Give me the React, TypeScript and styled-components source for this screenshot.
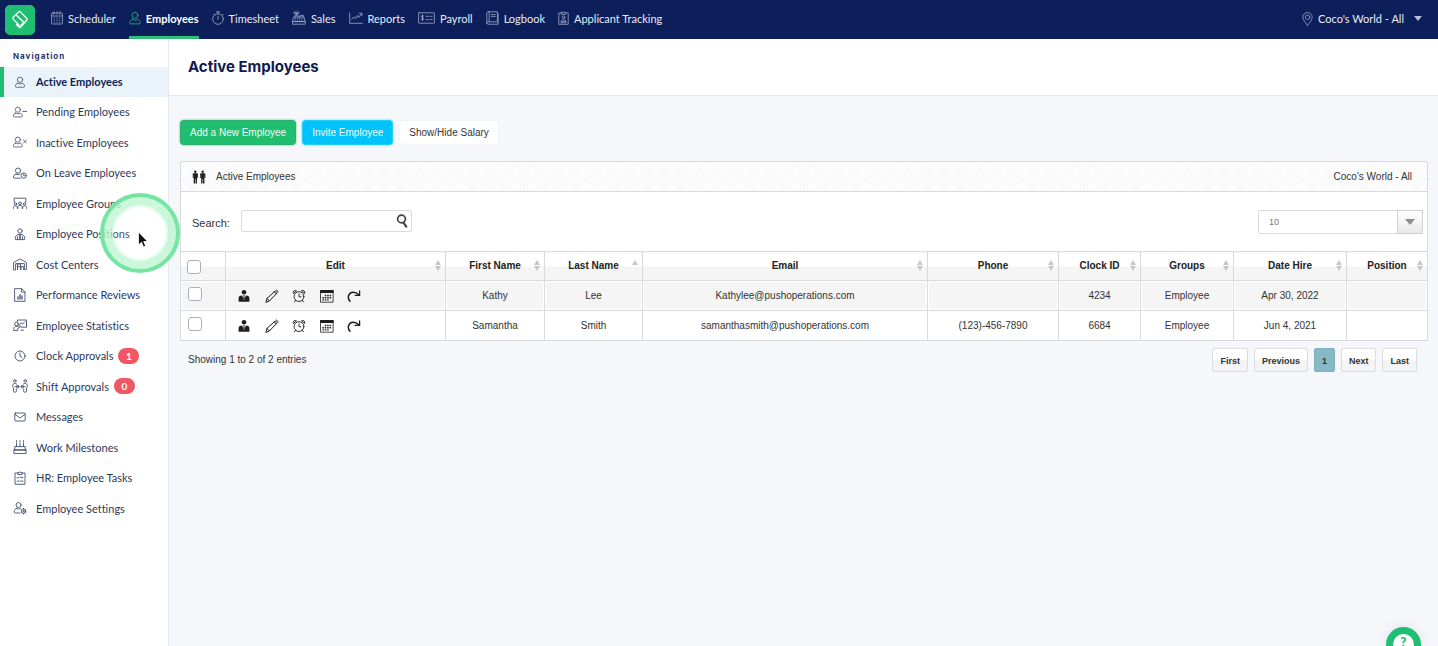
import React from "react";
import styled, { createGlobalStyle, css } from "styled-components";

const navy = "#0d1f5a";
const green = "#1fbe73";
const ink = "#2c3a5c";
const line = "#d9dadb";
const helvetica = '"Liberation Sans", Arial, Helvetica, sans-serif';

const GlobalStyle = createGlobalStyle`
  *, *::before, *::after { box-sizing: border-box; }
  body {
    margin: 0;
    background: #f5f7fb;
    color: #333;
    font-family: Lato, sans-serif;
    font-size: 11px;
    font-variant-ligatures: none;
  }
  button, input, select { font: inherit; color: inherit; margin: 0; }
  ul { list-style: none; margin: 0; padding: 0; }
  a { color: inherit; text-decoration: none; }
`;

/* ---------- icons ---------- */

type IconName =
  | "scheduler" | "person" | "stopwatch" | "register" | "chart" | "cheque" | "book" | "badge"
  | "pin" | "personSmall" | "personMinus" | "personX" | "personClock" | "group" | "position" | "warehouse"
  | "report" | "presentation" | "clock" | "swap" | "mail" | "cake" | "clipboard" | "personGear"
  | "profile" | "pencil" | "alarm" | "calendar" | "redo" | "people" | "search";

const personShape = (
  <>
    <circle cx="6" cy="4.4" r="3" />
    <path d="M3.400 8.400C1.800 8.800.8 10 .8 11.600c0 .8.400 1.300 1.200 1.300h8c.8 0 1.200-.5 1.200-1.300 0-1.600-1-2.800-2.600-3.200-1.600 1-3.600 1-5.200 0z" />
  </>
);

const icons: Record<IconName, { box: string; art: React.ReactNode }> = {
  scheduler: {
    box: "0 0 12 14",
    art: (
      <>
        <rect x=".6" y="2" width="10.8" height="11" rx="1" />
        <path d="M.6 5h10.800M3 .8v2.400M6 .8v2.400M9 .8v2.400" />
        <path d="M2.800 7.200h6.800M2.800 9.200h6.800M2.800 11.200h6.800" strokeLinecap="butt" strokeDasharray="1.200 1.400" />
      </>
    ),
  },
  person: { box: "0 0 12 14", art: personShape },
  stopwatch: {
    box: "0 0 12 14",
    art: (
      <>
        <circle cx="6" cy="8" r="5.3" />
        <path d="M4.600.8h2.800M6 .8v2M6 5v3.400M10 3.300l1 1M1.800 3.400l.6.6" />
      </>
    ),
  },
  register: {
    box: "0 0 14 14",
    art: (
      <>
        <path d="M2 6h10l1.200 4.600H.8zM.7 10.600h12.600v2.600H.7zM3 6V4h3v2M4.500 4V2.400M2.400 1h4.400v1.500H2.400zM8 6V4.400h3.400V6" />
        <path d="M3 7.400h8.500M2.600 9h9" strokeLinecap="butt" strokeDasharray="1.200 1" />
      </>
    ),
  },
  chart: {
    box: "0 0 14 14",
    art: <path d="M.7 2v10.300h12.800M2.800 8.400l2.400-2.600 1.400 1.800 1.800-3.200 1.300 2 3-4M10.200 2.200h2.600v2.600" />,
  },
  cheque: {
    box: "0 0 17 14",
    art: (
      <>
        <rect x=".6" y="1.800" width="15.800" height="10.400" rx=".6" />
        <path d="M5.600 5C4.800 4.300 3.300 4.500 3.300 5.600c0 1.400 2.400.8 2.400 2.200 0 1.100-1.700 1.300-2.600.5M4.500 3.800v5.700M8 5.300h2.200M11.600 5.300h2.600M8 8.600h2.200M11.600 8.600h2.600" />
      </>
    ),
  },
  book: {
    box: "0 0 13 14",
    art: (
      <>
        <path d="M2.200.8h9.200v10H2.400c-1 0-1.600.5-1.600 1.200M.8 12V2.200C.8 1.300 1.300.8 2.200.8M.8 12c0 .8.6 1.200 1.600 1.200h9.800V2.600M3.200.8v10" />
        <path d="M5.400 3.600h3.800M5.400 5.400h3.800" />
      </>
    ),
  },
  badge: {
    box: "0 0 11 14",
    art: (
      <>
        <path d="M3.500 2H.8v11.300h9.400V2H7.500M3.700 1.200h3.600v2.200H3.700z" />
        <circle cx="5.500" cy="6.300" r="1.400" />
        <path d="M3 10.200c0-2 5-2 5 0zM2.800 11.800h5.400" />
      </>
    ),
  },
  pin: {
    box: "0 0 11 14",
    art: (
      <>
        <path d="M5.500 13.200C3.500 10.500.8 8 .8 5.300a4.700 4.700 0 0 1 9.400 0c0 2.700-2.700 5.200-4.700 7.900z" />
        <circle cx="5.500" cy="5.300" r="2.200" />
      </>
    ),
  },
  personSmall: { box: "0 0 14 14", art: <g transform="translate(1.700 .9) scale(.88)">{personShape}</g> },
  personMinus: {
    box: "0 0 14 14",
    art: (
      <>
        <g transform="translate(-.3 .9) scale(.86)">{personShape}</g>
        <path d="M9.800 6.400h3.800" />
      </>
    ),
  },
  personX: {
    box: "0 0 14 14",
    art: (
      <>
        <g transform="translate(-.3 .9) scale(.86)">{personShape}</g>
        <path d="M10.600 5.200l2.600 2.600M13.200 5.200l-2.600 2.600" />
      </>
    ),
  },
  personClock: {
    box: "0 0 14 14",
    art: (
      <>
        <circle cx="5" cy="4.600" r="2.600" />
        <path d="M3 8C1.200 8.700.5 9.800.5 11c0 .8.300 1.200 1.100 1.200h5.600M3 8c1.200.8 3 .8 4.200 0" />
        <circle cx="10.700" cy="9.600" r="2.700" />
        <path d="M10.700 8.200v1.500h1.200" />
      </>
    ),
  },
  group: {
    box: "0 0 14 14",
    art: (
      <>
        <path d="M1.200 6.400V2.200h11.600v4.200" />
        <circle cx="2.600" cy="8" r="1.200" />
        <circle cx="7" cy="7.400" r="1.400" />
        <circle cx="11.400" cy="8" r="1.200" />
        <path d="M.5 12.400v-1.100c0-2 3.800-2 3.800 0v1.100M4.900 12.400v-1.500c0-2.100 4.200-2.100 4.200 0v1.500M9.700 12.400v-1.100c0-2 3.800-2 3.800 0v1.100" />
      </>
    ),
  },
  position: {
    box: "0 0 14 14",
    art: (
      <>
        <circle cx="7" cy="4" r="2.200" />
        <path d="M2.300 12.200c-.4-3.600 1.900-4.900 4.700-4.900s5.100 1.300 4.700 4.900zM7 7.600l-.8 1.600.8 2.800.8-2.800zM4.500 9.800v2.200M9.500 9.800v2.200" />
      </>
    ),
  },
  warehouse: {
    box: "0 0 14 14",
    art: (
      <path d="M.6 12.600V5.400L7 2l6.400 3.400v7.200h-2V6.600H2.600v6zM4.500 12.600V9.700h3.300v2.900M7.800 12.600V9.700h2.800v2.900M4.500 9.700V7h3v2.700" />
    ),
  },
  report: {
    box: "0 0 12 14",
    art: (
      <>
        <path d="M1 .7h6.800L11 3.900v9.400H1zM7.600.8v3.300H11" />
        <path d="M4 11V8.800M6 11V6.600M8 11V8" strokeWidth="1.300" />
      </>
    ),
  },
  presentation: {
    box: "0 0 14 14",
    art: (
      <>
        <path d="M4.600 3.400V2h8.900v7.200H8.300M6.700 6.300l1.600-1.400 1.200 1.300 2.300-2.400" />
        <circle cx="3.500" cy="6" r="1.800" />
        <path d="M.6 12.200c0-3.600 1.500-3.900 3.300-3.700l3.200-.9.600 1-3 1.700v1.900zM8 12.200h2.500" />
      </>
    ),
  },
  clock: {
    box: "0 0 14 14",
    art: (
      <>
        <circle cx="7" cy="7" r="5" />
        <path d="M7 4v3.300l2 1" />
      </>
    ),
  },
  swap: {
    box: "0 0 16 14",
    art: (
      <>
        <circle cx="2.800" cy="1.900" r="1.300" />
        <circle cx="13.200" cy="1.900" r="1.300" />
        <path d="M4.800 5.200C3.300 3.800.7 4.300.7 6.500c0 1.500.8 2 .8 3.400v2.700c0 .8 2.800.8 2.800 0V9.800M11.200 5.200c1.500-1.400 4.100-.9 4.100 1.300 0 1.500-.8 2-.8 3.400v2.700c0 .8-2.800.8-2.800 0V9.800M3.400 7.600h2.800M9.800 7.600h2.800" />
        <circle cx="5.700" cy="7.600" r="1.300" />
        <circle cx="10.300" cy="7.600" r="1.300" />
      </>
    ),
  },
  mail: {
    box: "0 0 14 14",
    art: (
      <>
        <rect x="1.800" y="3" width="10.400" height="8" rx=".8" />
        <path d="M2 4.400L7 8l5-3.600" />
      </>
    ),
  },
  cake: {
    box: "0 0 14 14",
    art: (
      <path d="M1.800 9.500V6.600h10.400v2.900M.9 13.100V9.700h12.200v3.400zM3.500 6.600V3M7 6.600V3M10.500 6.600V3M3.500 1.800V.6M7 1.800V.6M10.500 1.800V.6M1 9.800c1.200 1 2 1 3 0 1.100 1 2 1 3 0 1.100 1 2 1 3 0 1.100 1 2 1 3 0" />
    ),
  },
  clipboard: {
    box: "0 0 12 14",
    art: (
      <>
        <path d="M3.800 2H1v11.300h10V2H8.200M3.900 3.200V1.700h1.200C5.200.5 6.800.5 6.900 1.700h1.200v1.500z" />
        <path d="M3 6.500l.8.800 1.200-1.500M6.400 6.600H9M3 10l.8.800L5 9.300M6.400 10.200H9" />
      </>
    ),
  },
  personGear: {
    box: "0 0 14 14",
    art: (
      <>
        <circle cx="5.600" cy="4" r="2.500" />
        <path d="M3.700 7.400C1.900 8.100 1.200 9.300 1.200 10.800c0 .8.300 1.200 1.100 1.200h4.600M3.700 7.400c1.200.8 2.600.8 3.800 0" />
        <circle cx="10.500" cy="10.200" r="2.200" />
        <circle cx="10.500" cy="10.200" r=".6" />
        <path d="M10.500 7.400v.5M10.500 12.600v.5M8.100 8.800l.4.300M12.500 11.400l.4.300M12.900 8.800l-.4.300M8.500 11.400l-.4.300" />
      </>
    ),
  },
  profile: {
    box: "0 0 14 14",
    art: (
      <g fill="currentColor" stroke="none">
        <circle cx="7" cy="3.300" r="2.300" />
        <path d="M1.600 12.800V9.200c0-1.700.9-2.600 3.500-2.800L7 11.200l1.900-4.800c2.600.2 3.500 1.100 3.500 2.800v3.600z" />
        <path d="M6.200 6.200h1.600L7.400 7.600l.4 1.800-.8 1.200-.8-1.200.4-1.800z" />
      </g>
    ),
  },
  pencil: {
    box: "0 0 14 14",
    art: <path d="M1 13l1-3.600L10.400 1.900l1.900 1.900-7.900 8.100zM9.300 2.800l1.900 2M2 9.500l2.300 2.300M11.400 1l1.700 1.700" />,
  },
  alarm: {
    box: "0 0 14 14",
    art: (
      <>
        <circle cx="7" cy="7.600" r="4.900" strokeWidth=".9" />
        <path d="M7 4.800v3h2M1.200 4.200C.6 2 2.600.8 4.200 1.700zM12.800 4.200c.6-2.200-1.400-3.400-3-2.500zM3.500 11.400l-1 1.500M10.500 11.400l1 1.500" strokeWidth=".9" />
      </>
    ),
  },
  calendar: {
    box: "0 0 14 14",
    art: (
      <>
        <path d="M.8 1.500h12.400v2H.8z" fill="currentColor" />
        <path d="M.9 1.500h12.200v11.700H.9z" strokeWidth=".8" />
        <path d="M4.800 6.500h7M2.400 8.700h9.400M2.400 10.900h7" strokeWidth="1.400" strokeLinecap="butt" strokeDasharray="1.500 .9" />
      </>
    ),
  },
  redo: {
    box: "0 0 14 14",
    art: (
      <>
        <path d="M3 12.300C-.4 8.400 1.800 3.600 6 3.300c2.400-.1 4.200.9 5.800 2.500" strokeWidth="1.500" />
        <path d="M12.600 2v4.400H8.200" strokeWidth="1.300" />
      </>
    ),
  },
  people: {
    box: "0 0 14 14",
    art: (
      <g fill="currentColor" stroke="none">
        <circle cx="3.300" cy="1.700" r="1.200" />
        <circle cx="10.700" cy="1.700" r="1.200" />
        <path d="M1.500 3.300h3.600c.6 0 .9.400.9.900v3.900h-.8V5.200H5v8.300H3.600V8.900h-.5v4.600H1.700V5.200h-.2v2.900H.7V4.200c0-.5.300-.9.800-.9zM8.900 3.300h3.600c.6 0 .9.400.9.900v3.900h-.8V5.200h-.2v8.300H11V8.900h-.5v4.600H9.100V5.200h-.2v2.900h-.8V4.200c0-.5.300-.9.800-.9z" />
      </g>
    ),
  },
  search: {
    box: "0 0 12 14",
    art: (
      <>
        <circle cx="5.500" cy="5" r="3.900" strokeWidth="1.700" />
        <path d="M7.500 8.600l2.700 4" strokeWidth="2.200" />
      </>
    ),
  },
};

const Svg = styled.svg`
  display: block;
  flex: none;
  fill: none;
  stroke: currentColor;
  stroke-linecap: round;
  stroke-linejoin: round;
`;

function Icon({ name, width = 14, weight = 0.8 }: { name: IconName; width?: number; weight?: number }) {
  return (
    <Svg width={width} height="14" viewBox={icons[name].box} strokeWidth={weight} aria-hidden="true">
      {icons[name].art}
    </Svg>
  );
}

/* ---------- top bar ---------- */

const TopBar = styled.header`
  display: flex;
  align-items: stretch;
  height: 39px;
  padding: 0 16px 0 5px;
  background: ${navy};
  color: #e8ebf5;
`;

const Logo = styled.a`
  display: grid;
  place-items: center;
  align-self: center;
  width: 30px;
  height: 30px;
  margin-right: 16px;
  border-radius: 5px;
  background: ${green};
`;

const MainMenu = styled.nav`
  display: flex;
  gap: 13px;
  flex: 1;
`;

const MenuLink = styled.a<{ $active?: boolean }>`
  display: flex;
  align-items: center;
  gap: 5px;
  border-bottom: 3px solid transparent;
  white-space: nowrap;
  svg { color: #a3abca; }
  ${(p) =>
    p.$active &&
    css`
      border-color: #2fbd77;
      color: #fff;
      font-weight: 700;
      svg { color: ${green}; }
    `}
`;

const LocationButton = styled.button`
  display: flex;
  align-items: center;
  gap: 5px;
  padding: 0 0 2px;
  border: 0;
  background: none;
  svg { color: #a3abca; }
`;

const Caret = styled.span<{ $wide?: boolean; $color: string }>`
  margin-left: ${(p) => (p.$wide ? 0 : 5)}px;
  border: ${(p) => (p.$wide ? 5 : 4)}px solid transparent;
  border-top: ${(p) => (p.$wide ? 6 : 5)}px solid ${(p) => p.$color};
  border-bottom: 0;
`;

/* ---------- side bar ---------- */

const Body = styled.div`
  display: flex;
  min-height: calc(100vh - 39px);
`;

const SideBar = styled.aside`
  flex: none;
  width: 169px;
  border-right: 1px solid #e4e8f0;
  background: #fff;
  color: ${ink};
`;

const SideTitle = styled.h2`
  margin: 0;
  padding: 11px 0 5px 13px;
  font: 700 8px/12px Inter, sans-serif;
  letter-spacing: 1px;
  color: #26356a;
`;

const SideList = styled.ul`
  display: grid;
  grid-auto-rows: 1fr;
  min-height: 457px;
`;

const SideLink = styled.a<{ $active?: boolean }>`
  display: flex;
  align-items: center;
  gap: 8px;
  height: 30px;
  padding: 0 0 1px 8px;
  border-left: 4px solid transparent;
  ${(p) =>
    p.$active &&
    css`
      border-color: ${green};
      background: #eaf2fa;
      color: ${navy};
      font-weight: 700;
    `}
`;

const IconSlot = styled.span`
  display: flex;
  justify-content: center;
  width: 16px;
  color: #42506f;
`;

const Count = styled.span`
  min-width: 21px;
  margin-left: -3px;
  border-radius: 8px;
  background: #ee5763;
  color: #fff;
  font: 700 10px/16px Lato, sans-serif;
  text-align: center;
`;

/* ---------- content ---------- */

const Main = styled.main`
  flex: 1;
  min-width: 0;
  font-family: ${helvetica};
  font-size: 10px;
`;

const PageHead = styled.div`
  padding: 16px 19px;
  border-bottom: 1px solid #e4e8f0;
  background: #fff;
`;

const PageTitle = styled.h1`
  margin: 0;
  font: 700 15px/24px Inter, sans-serif;
  color: #101a4f;
`;

const Content = styled.div`
  padding: 24px 10px 24px 11px;
`;

const Actions = styled.div`
  display: flex;
  gap: 6px;
  margin-bottom: 16px;
`;

const ActionButton = styled.button<{ $fill: string; $edge: string; $light?: boolean }>`
  height: 25px;
  padding: 0 9px;
  border: 1px solid ${(p) => p.$edge};
  border-radius: 4px;
  background: ${(p) => p.$fill};
  box-shadow: 0 0 2px ${(p) => p.$edge};
  color: ${(p) => (p.$light ? "#eefaf5" : "#333")};
`;

const Panel = styled.section`
  border: 1px solid ${line};
  border-radius: 2px 2px 0 0;
  background: #fff;
`;

const PanelHead = styled.div`
  display: flex;
  align-items: center;
  gap: 10px;
  height: 30px;
  padding: 0 15px 0 11px;
  border-bottom: 1px solid ${line};
  background:
    repeating-linear-gradient(45deg, #f8f8f8 0 1px, transparent 1px 3px),
    repeating-linear-gradient(-45deg, #f8f8f8 0 1px, transparent 1px 3px),
    #fff;
  svg { color: #222; }
`;

const PanelTitle = styled.h2`
  flex: 1;
  margin: 0;
  font-size: inherit;
  font-weight: 400;
`;

const Filters = styled.div`
  display: flex;
  align-items: center;
  justify-content: space-between;
  height: 59px;
  padding: 0 4px 0 11px;
`;

const SearchLabel = styled.label`
  display: flex;
  align-items: center;
  gap: 11px;
  font-size: 11px;
  padding-top: 2px;
`;

const SearchBox = styled.span`
  position: relative;
  padding-bottom: 4px;
  svg { position: absolute; top: 4px; right: 4px; color: #444; }
`;

const SearchInput = styled.input`
  display: block;
  width: 171px;
  height: 22px;
  padding: 0 20px 0 6px;
  border: 1px solid ${line};
  border-radius: 2px;
  background: #fff;
`;

const LengthBox = styled.span`
  position: relative;
  width: 165px;
`;

const LengthSelect = styled.select`
  display: block;
  width: 100%;
  height: 24px;
  padding: 0 36px 0 10px;
  border: 1px solid ${line};
  border-radius: 2px;
  appearance: none;
  background: #fff;
  color: #777;
  font-size: 9px;
`;

const LengthArrow = styled.span`
  position: absolute;
  inset: 0 0 0 auto;
  display: grid;
  place-items: center;
  width: 26px;
  border: 1px solid #cfd0d1;
  background: linear-gradient(#fff, #e9e9e9);
  pointer-events: none;
`;

const Grid = styled.table`
  width: calc(100% + 2px);
  margin: 0 -1px -1px;
  border-collapse: collapse;
  table-layout: fixed;
  text-align: center;
  line-height: 12px;
`;

const HeadCell = styled.th`
  position: relative;
  height: 29px;
  padding: 0;
  border: 1px solid ${line};
  background: linear-gradient(#fff 50%, #f5f5f5 50%);
  color: #222;
  font-weight: 700;
`;

const Row = styled.tr`
  &:nth-child(odd) { background: #f5f5f5; }
`;

const Cell = styled.td`
  height: 30px;
  padding: 0;
  border: 1px solid ${line};
  box-shadow: inset 0 0 0 1px #fff;
`;

const Sorter = styled.button`
  position: absolute;
  top: 8px;
  right: 4px;
  display: grid;
  gap: 1px;
  padding: 0;
  border: 0;
  background: none;
`;

const Triangle = styled.span<{ $down?: boolean }>`
  border: 3px solid transparent;
  border-${(p) => (p.$down ? "top" : "bottom")}: 5px solid #c6c6c6;
  border-${(p) => (p.$down ? "bottom" : "top")}: 0;
`;

const Tick = styled.input`
  display: block;
  appearance: none;
  width: 14px;
  height: 14px;
  border: 1px solid #aab0bb;
  border-radius: 3px;
  background: #fff;
`;

const TickSlot = styled.div<{ $head?: boolean }>`
  padding: ${(p) => (p.$head ? "2px 0 0 6px" : "0 0 3px 7px")};
`;

const EditTools = styled.div`
  display: flex;
  justify-content: space-between;
  width: 135px;
  padding-left: 11px;
`;

const ToolButton = styled.button`
  padding: 0;
  border: 0;
  background: none;
  color: #1d1d1d;
`;

const Footer = styled.div`
  display: flex;
  justify-content: space-between;
  padding: 7px 11px 0 8px;
  line-height: 24px;
`;

const Pager = styled.nav`
  display: flex;
  gap: 6px;
`;

const PageButton = styled.button<{ $current?: boolean }>`
  height: 24px;
  padding: 0 7px;
  border: 1px solid #dcdcdc;
  border-radius: 2px;
  background: linear-gradient(#fff 50%, #f4f4f4 50%);
  color: #333;
  font-size: 9px;
  font-weight: 700;
  ${(p) =>
    p.$current &&
    css`
      border-color: #7fb0bd;
      background: #88b8c4;
    `}
`;

/* ---------- floating parts ---------- */

const HelpButton = styled.button`
  position: fixed;
  right: 17px;
  bottom: -16px;
  display: grid;
  place-items: center;
  width: 35px;
  height: 35px;
  padding: 0;
  border: 0;
  border-radius: 50%;
  background: ${green};
  box-shadow: 0 0 12px #dfe2e8;
`;

const HelpMark = styled.span`
  width: 21px;
  height: 21px;
  border-radius: 50%;
  background: #fff;
  color: ${green};
  font: 900 14px/16px Lato, sans-serif;
`;

const Spotlight = styled.div`
  position: absolute;
  top: 193px;
  left: 100px;
  display: grid;
  place-items: center;
  width: 80px;
  height: 80px;
  border: 4px solid #76e5a3;
  border-radius: 50%;
  background: radial-gradient(circle, rgba(255, 255, 255, 0.1) 25px, rgba(190, 246, 209, 0.8) 29px);
  pointer-events: none;
`;

const Pointer = styled.svg`
  margin: 14px 0 0 6px;
`;

/* ---------- data ---------- */

const menu: { label: string; icon: IconName; width: number; active?: boolean }[] = [
  { label: "Scheduler", icon: "scheduler", width: 12 },
  { label: "Employees", icon: "person", width: 12, active: true },
  { label: "Timesheet", icon: "stopwatch", width: 12 },
  { label: "Sales", icon: "register", width: 14 },
  { label: "Reports", icon: "chart", width: 14 },
  { label: "Payroll", icon: "cheque", width: 17 },
  { label: "Logbook", icon: "book", width: 13 },
  { label: "Applicant Tracking", icon: "badge", width: 11 },
];

const sections: { label: string; icon: IconName; count?: number; width?: number }[] = [
  { label: "Active Employees", icon: "personSmall" },
  { label: "Pending Employees", icon: "personMinus" },
  { label: "Inactive Employees", icon: "personX" },
  { label: "On Leave Employees", icon: "personClock" },
  { label: "Employee Groups", icon: "group" },
  { label: "Employee Positions", icon: "position" },
  { label: "Cost Centers", icon: "warehouse" },
  { label: "Performance Reviews", icon: "report", width: 12 },
  { label: "Employee Statistics", icon: "presentation" },
  { label: "Clock Approvals", icon: "clock", count: 1 },
  { label: "Shift Approvals", icon: "swap", count: 0, width: 16 },
  { label: "Messages", icon: "mail" },
  { label: "Work Milestones", icon: "cake" },
  { label: "HR: Employee Tasks", icon: "clipboard", width: 12 },
  { label: "Employee Settings", icon: "personGear" },
];

const columns: { label: string; width?: number; sorted?: boolean }[] = [
  { label: "Edit", width: 220 },
  { label: "First Name", width: 99 },
  { label: "Last Name", width: 98, sorted: true },
  { label: "Email" },
  { label: "Phone", width: 131 },
  { label: "Clock ID", width: 82 },
  { label: "Groups", width: 93 },
  { label: "Date Hire", width: 113 },
  { label: "Position", width: 81 },
];

const employees = [
  ["Kathy", "Lee", "Kathylee@pushoperations.com", "", "4234", "Employee", "Apr 30, 2022", ""],
  ["Samantha", "Smith", "samanthasmith@pushoperations.com", "(123)-456-7890", "6684", "Employee", "Jun 4, 2021", ""],
];

const tools: { label: string; icon: IconName }[] = [
  { label: "Profile", icon: "profile" },
  { label: "Edit", icon: "pencil" },
  { label: "Time", icon: "alarm" },
  { label: "Schedule", icon: "calendar" },
  { label: "Transfer", icon: "redo" },
];

export default function App() {
  return (
    <>
      <GlobalStyle />
      <TopBar>
        <Logo href="#" aria-label="Home">
          <svg width="18" height="20" viewBox="0 0 18 20" fill="none" stroke="#fff" strokeWidth="1.300" strokeLinejoin="round" strokeLinecap="round" aria-hidden="true">
            <path d="M7.600 1.600L2.200 7.200q-.8.900 0 1.800l6.600 7 5.200-5.600-5.400-8.800q-.5-.6-1 0z" stroke="none" />
            <path d="M7.600 1.900L2.200 7.300q-.8.900 0 1.800l5.900 6.100q.9.800 1.800 0l2.900-3M4.900 4.700l7.900 7.500M7.600 1.900q.9-.8 1.800 0l6.300 6.500q.8.900 0 1.800l-6 6.900q-.9.900-1.800 0l-2.500-2.700" />
          </svg>
        </Logo>
        <MainMenu aria-label="Main">
          {menu.map((m) => (
            <MenuLink key={m.label} href="#" $active={m.active}>
              <Icon name={m.icon} width={m.width} />
              {m.label}
            </MenuLink>
          ))}
        </MainMenu>
        <LocationButton type="button">
          <Icon name="pin" width={11} />
          Coco's World - All
          <Caret $color="#b9c0d8" />
        </LocationButton>
      </TopBar>
      <Body>
        <SideBar>
          <SideTitle>Navigation</SideTitle>
          <SideList>
            {sections.map((s, i) => (
              <li key={s.label}>
                <SideLink href="#" $active={i === 0}>
                  <IconSlot>
                    <Icon name={s.icon} width={s.width} weight={0.9} />
                  </IconSlot>
                  {s.label}
                  {s.count !== undefined && <Count>{s.count}</Count>}
                </SideLink>
              </li>
            ))}
          </SideList>
        </SideBar>
        <Main>
          <PageHead>
            <PageTitle>Active Employees</PageTitle>
          </PageHead>
          <Content>
            <Actions>
              <ActionButton type="button" $fill="#20bf6f" $edge="#2fae70" $light>Add a New Employee</ActionButton>
              <ActionButton type="button" $fill="#00c3fb" $edge="#23cdf5" $light>Invite Employee</ActionButton>
              <ActionButton type="button" $fill="#fff" $edge="#f3f4f6">Show/Hide Salary</ActionButton>
            </Actions>
            <Panel>
              <PanelHead>
                <Icon name="people" />
                <PanelTitle>Active Employees</PanelTitle>
                <span>Coco's World - All</span>
              </PanelHead>
              <Filters>
                <SearchLabel>
                  Search:
                  <SearchBox>
                    <SearchInput type="text" />
                    <Icon name="search" width={12} />
                  </SearchBox>
                </SearchLabel>
                <LengthBox>
                  <LengthSelect aria-label="Entries per page" defaultValue="10">
                    <option>10</option>
                    <option>25</option>
                    <option>50</option>
                  </LengthSelect>
                  <LengthArrow>
                    <Caret $wide $color="#8d8d8d" />
                  </LengthArrow>
                </LengthBox>
              </Filters>
              <Grid>
                <colgroup>
                  <col width={45} />
                  {columns.map((c) => (
                    <col key={c.label} width={c.width} />
                  ))}
                </colgroup>
                <thead>
                  <tr>
                    <HeadCell>
                      <TickSlot $head>
                        <Tick type="checkbox" aria-label="Select all" />
                      </TickSlot>
                    </HeadCell>
                    {columns.map((c) => (
                      <HeadCell key={c.label} scope="col">
                        {c.label}
                        <Sorter type="button" aria-label={`Sort by ${c.label}`}>
                          <Triangle />
                          {!c.sorted && <Triangle $down />}
                        </Sorter>
                      </HeadCell>
                    ))}
                  </tr>
                </thead>
                <tbody>
                  {employees.map((e) => (
                    <Row key={e[0]}>
                      <Cell>
                        <TickSlot>
                          <Tick type="checkbox" aria-label={`Select ${e[0]} ${e[1]}`} />
                        </TickSlot>
                      </Cell>
                      <Cell>
                        <EditTools>
                          {tools.map((t) => (
                            <ToolButton key={t.label} type="button" aria-label={`${t.label} ${e[0]}`}>
                              <Icon name={t.icon} weight={1} />
                            </ToolButton>
                          ))}
                        </EditTools>
                      </Cell>
                      {e.map((value, i) => (
                        <Cell key={i}>{value}</Cell>
                      ))}
                    </Row>
                  ))}
                </tbody>
              </Grid>
            </Panel>
            <Footer>
              <span>Showing 1 to 2 of 2 entries</span>
              <Pager aria-label="Pages">
                <PageButton type="button">First</PageButton>
                <PageButton type="button">Previous</PageButton>
                <PageButton type="button" $current>1</PageButton>
                <PageButton type="button">Next</PageButton>
                <PageButton type="button">Last</PageButton>
              </Pager>
            </Footer>
          </Content>
        </Main>
      </Body>
      <HelpButton type="button" aria-label="Help">
        <HelpMark>?</HelpMark>
      </HelpButton>
      <Spotlight>
        <Pointer width="12" height="18" viewBox="0 0 12 18" aria-hidden="true">
          <path d="M1.500 1v13l3-2.800 2 4.800 2.200-1-2-4.500h4z" fill="#111" stroke="#fff" strokeWidth=".8" />
        </Pointer>
      </Spotlight>
    </>
  );
}
